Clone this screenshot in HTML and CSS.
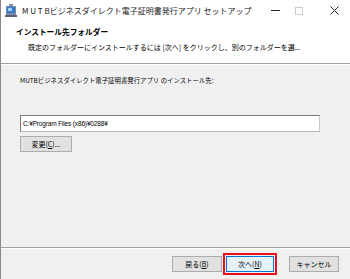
FILE: index.html
```html
<!DOCTYPE html>
<html lang="ja">
<head>
<meta charset="utf-8">
<link rel="stylesheet" href="styles.css">
</head>
<body>
<div class="window">
  <div class="titlebar">
    <svg class="appicon" width="12" height="14" viewBox="0 0 12 14">
      <rect x="1" y="2" width="10" height="9" fill="#7a8ca8"/>
      <rect x="2" y="3" width="8" height="6" fill="#3a78c8"/>
      <rect x="3" y="4" width="4" height="3" fill="#9fd0f5"/>
      <rect x="0" y="11" width="12" height="2" fill="#5a6478"/>
      <rect x="4" y="0" width="4" height="2" fill="#7a8ca8"/>
    </svg>
    <span class="title">M U T Bビジネスダイレクト電子証明書発行アプリ セットアップ</span>
    <div class="controls">
      <span class="ctl min"></span>
      <span class="ctl max"></span>
      <svg class="ctl close" width="9" height="9" viewBox="0 0 9 9"><path d="M0.5 0.5L8.5 8.5M8.5 0.5L0.5 8.5" stroke="#222" stroke-width="1"/></svg>
    </div>
  </div>
  <div class="header">
    <div class="h-title">インストール先フォルダー</div>
    <div class="h-sub">既定のフォルダーにインストールするには [次へ] をクリックし、別のフォルダーを選...</div>
  </div>
  <div class="content">
    <div class="label">MUTBビジネスダイレクト電子証明書発行アプリ のインストール先:</div>
    <div class="path">C:¥Program Files (x86)¥0288¥</div>
    <div class="btn change">変更(<u>C</u>)...</div>
  </div>
  <div class="footer">
    <div class="btn">戻る(<u>B</u>)</div>
    <div class="focus"><div class="btn next">次へ(<u>N</u>)</div></div>
    <div class="btn cancel">キャンセル</div>
  </div>
</div>
</body>
</html>
```
FILE: styles.css
```css
* { box-sizing: border-box; }
html, body { margin: 0; padding: 0; }
body {
  width: 350px;
  height: 279px;
  overflow: hidden;
  font-family: "Noto Sans CJK JP", "Liberation Sans", sans-serif;
  color: #000;
  background: #f0f0f0;
}
.window {
  width: 350px;
  height: 279px;
  display: flex;
  flex-direction: column;
  border-left: 1px solid #8a8a8a;
}
.titlebar {
  height: 21px;
  background: #fff;
  display: flex;
  align-items: center;
  padding-left: 4px;
}
.appicon { flex: none; margin-right: 5px; }
.title {
  font-size: 8px;
  color: #222;
  white-space: nowrap;
}
.controls {
  margin-left: auto;
  display: flex;
  align-items: center;
}
.ctl { display: block; }
.min { width: 9px; height: 1px; background: #222; margin-right: 15px; }
.max { width: 8px; height: 8px; border: 1px solid #ccc; margin-right: 27px; }
.close { margin-right: 11px; }
.header {
  height: 43px;
  background: #fff;
  border-bottom: 1px solid #a0a0a0;
  padding: 5px 0 0 15px;
}
.h-title {
  font-size: 7.7px;
  font-weight: bold;
  line-height: 11px;
  white-space: nowrap;
}
.h-sub {
  font-size: 7px;
  line-height: 10px;
  margin-top: 5px;
  padding-left: 12px;
  white-space: nowrap;
}
.content {
  flex: 1;
  padding: 11px 0 0 19px;
  border-top: 1px solid #fff;
  border-bottom: 1px solid #a0a0a0;
  display: flex;
  flex-direction: column;
  align-items: flex-start;
}
.label {
  font-size: 6.4px;
  line-height: 10px;
  white-space: nowrap;
}
.path {
  margin-top: 29px;
  width: 300px;
  height: 17px;
  background: #fff;
  border: 1px solid #7a7a7a;
  border-bottom-color: #b8b8b8;
  border-right-color: #c8c8c8;
  font-family: "Liberation Sans", sans-serif;
  font-size: 6.5px;
  letter-spacing: -0.15px;
  line-height: 15px;
  padding-left: 2px;
  white-space: nowrap;
}
.btn {
  width: 50px;
  height: 16px;
  background: #e1e1e1;
  border: 1px solid #adadad;
  font-size: 7px;
  line-height: 14px;
  text-align: center;
  white-space: nowrap;
}
.change { margin-top: 4px; width: 52px; }
.footer {
  height: 31px;
  border-top: 1px solid #fff;
  display: flex;
  align-items: center;
  padding-left: 171px;
}
.focus {
  margin-left: 1px;
  border: 2px solid #e8101a;
  padding: 1px;
}
.next {
  border-color: #0078d7;
  background: #e5f1fb;
  width: 48px;
}
.cancel { margin-left: 12px; }
```
